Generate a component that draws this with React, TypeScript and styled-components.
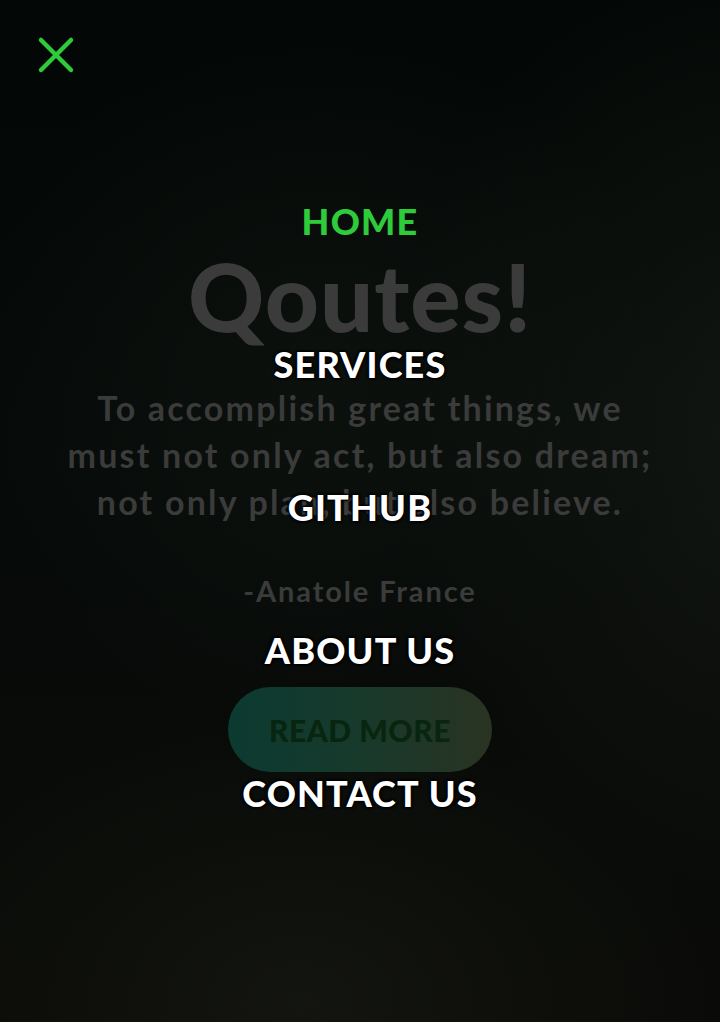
import React from "react";
import styled, { createGlobalStyle } from "styled-components";

const Global = createGlobalStyle`
  html, body { margin: 0; padding: 0; background: #050806; }
  * { box-sizing: border-box; }
`;

const Page = styled.div`
  position: relative;
  width: 720px;
  height: 1022px;
  overflow: hidden;
  font-family: Lato, "Open Sans", sans-serif;
  background:
    radial-gradient(ellipse 520px 700px at 760px 420px, rgba(40, 44, 36, 0.35), transparent 70%),
    radial-gradient(ellipse 600px 420px at 300px 1000px, rgba(30, 32, 24, 0.45), transparent 70%),
    radial-gradient(ellipse 500px 500px at 320px 380px, rgba(18, 24, 20, 0.5), transparent 70%),
    linear-gradient(180deg, #030705 0%, #060a08 45%, #0a0b08 100%);
`;

const Hero = styled.main`
  display: flex;
  flex-direction: column;
  align-items: center;
  padding-top: 246px;
  text-align: center;
  color: #3b3b3b;
`;

const Title = styled.h1`
  margin: 0;
  font-size: 94px;
  font-weight: 900;
  line-height: 100px;
  letter-spacing: 1px;
`;

const Quote = styled.p`
  margin: 38px 0 0;
  font-size: 34px;
  font-weight: 700;
  line-height: 47px;
  letter-spacing: 2.2px;
  white-space: nowrap;
`;

const Author = styled.p`
  margin: 46px 0 0;
  font-size: 29px;
  font-weight: 700;
  line-height: 40px;
  letter-spacing: 1.9px;
`;

const ReadMore = styled.button`
  margin-top: 76px;
  width: 264px;
  height: 85px;
  border: none;
  border-radius: 43px;
  background: linear-gradient(90deg, #0c3a31 0%, #163a2c 45%, #2a3322 100%);
  color: #08250f;
  font-family: inherit;
  font-size: 30px;
  font-weight: 900;
  letter-spacing: 0.5px;
`;

const Overlay = styled.nav`
  position: absolute;
  inset: 0;
  display: flex;
  flex-direction: column;
  align-items: center;
  padding-top: 196px;
  gap: 93px;
`;

const MenuItem = styled.a<{ $active?: boolean }>`
  display: block;
  height: 50px;
  line-height: 50px;
  font-size: 36px;
  font-weight: 900;
  letter-spacing: 1.2px;
  text-decoration: none;
  color: ${(p) => (p.$active ? "#2ecc3a" : "#ffffff")};
  text-shadow: ${(p) =>
    p.$active
      ? "none"
      : "0 0 3px #000, 0 0 3px #000, 1px 1px 2px #000, -1px -1px 2px #000"};
`;

const Close = styled.button`
  position: absolute;
  top: 33px;
  left: 34px;
  width: 44px;
  height: 44px;
  padding: 0;
  border: none;
  background: transparent;
  display: flex;
  align-items: center;
  justify-content: center;
`;

const items = ["HOME", "SERVICES", "GITHUB", "ABOUT US", "CONTACT US"];

export default function App() {
  return (
    <>
      <Global />
      <Page>
        <Hero>
          <Title>Qoutes!</Title>
          <Quote>
            To accomplish great things, we
            <br />
            must not only act, but also dream;
            <br />
            not only plan, but also believe.
          </Quote>
          <Author>-Anatole France</Author>
          <ReadMore>READ MORE</ReadMore>
        </Hero>
        <Overlay>
          {items.map((it, i) => (
            <MenuItem key={it} href="#" $active={i === 0}>
              {it}
            </MenuItem>
          ))}
        </Overlay>
        <Close aria-label="close">
          <svg width="40" height="40" viewBox="0 0 40 40">
            <path
              d="M5 5 L35 35 M35 5 L5 35"
              stroke="#2ecc3a"
              strokeWidth="4.5"
              strokeLinecap="round"
            />
          </svg>
        </Close>
      </Page>
    </>
  );
}
